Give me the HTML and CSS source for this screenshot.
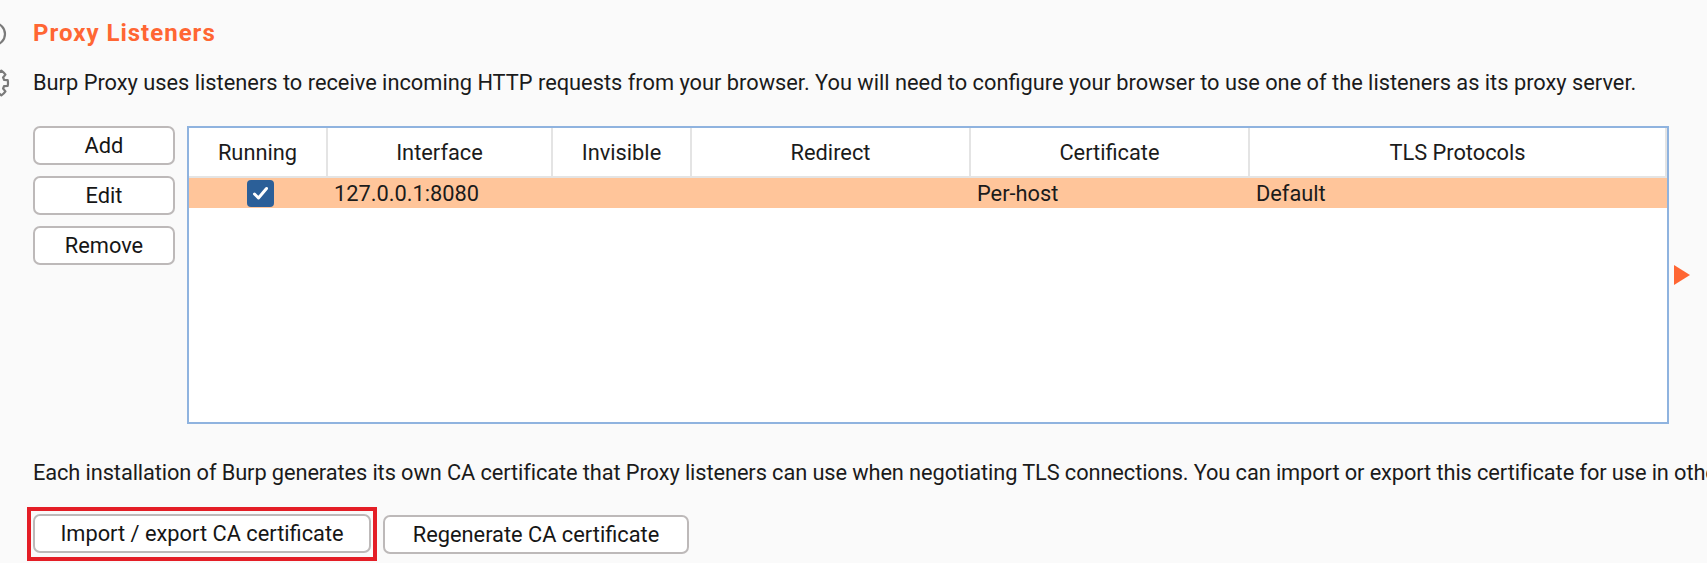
FILE: index.html
```html
<!DOCTYPE html>
<html>
<head>
<meta charset="utf-8">
<link rel="stylesheet" href="styles.css">
</head>
<body>
<div class="page">
  <div class="rail">
    <svg width="10" height="110" viewBox="0 0 10 110">
      <circle cx="-6" cy="34" r="11" fill="none" stroke="#7a7a7a" stroke-width="2.2"/>
      <path d="M -4.14 68.28 L -3.83 71.95 A 11.5 11.5 0 0 1 -1.42 72.94 L 1.39 70.56 A 15 15 0 0 1 5.44 74.61 L 3.06 77.42 A 11.5 11.5 0 0 1 4.05 79.83 L 7.72 80.14 A 15 15 0 0 1 7.72 85.86 L 4.05 86.17 A 11.5 11.5 0 0 1 3.06 88.58 L 5.44 91.39 A 15 15 0 0 1 1.39 95.44 L -1.42 93.06 A 11.5 11.5 0 0 1 -3.83 94.05 L -4.14 97.72" fill="none" stroke="#7a7a7a" stroke-width="2.2" stroke-linejoin="round"/>
    </svg>
  </div>
  <div class="main">
    <h1 class="title">Proxy Listeners</h1>
    <p class="desc">Burp Proxy uses listeners to receive incoming HTTP requests from your browser. You will need to configure your browser to use one of the listeners as its proxy server.</p>
    <div class="listeners">
      <div class="actions">
        <button class="btn">Add</button>
        <button class="btn">Edit</button>
        <button class="btn">Remove</button>
      </div>
      <div class="table">
        <div class="thead">
          <div class="th">Running</div>
          <div class="th">Interface</div>
          <div class="th">Invisible</div>
          <div class="th">Redirect</div>
          <div class="th">Certificate</div>
          <div class="th">TLS Protocols</div>
        </div>
        <div class="tr selected">
          <div class="td center"><span class="check"><svg width="17" height="15" viewBox="0 0 17 15"><path d="M2.5 8 L6.5 12 L14.5 2.5" fill="none" stroke="#fff" stroke-width="3" stroke-linecap="round" stroke-linejoin="round"/></svg></span></div>
          <div class="td">127.0.0.1:8080</div>
          <div class="td"></div>
          <div class="td"></div>
          <div class="td">Per-host</div>
          <div class="td">Default</div>
        </div>
      </div>
      <span class="expander"></span>
    </div>
    <p class="desc desc2">Each installation of Burp generates its own CA certificate that Proxy listeners can use when negotiating TLS connections. You can import or export this certificate for use in other tools or another installation of Burp.</p>
    <div class="ca-actions">
      <div class="highlight"><button class="btn btn-wide">Import / export CA certificate</button></div>
      <button class="btn btn-regen">Regenerate CA certificate</button>
    </div>
  </div>
</div>
</body>
</html>
```
FILE: styles.css
```css
html, body {
  margin: 0;
  padding: 0;
  background: #fafafa;
  overflow: hidden;
}
body {
  width: 1707px;
  height: 563px;
  font-family: Roboto, "Noto Sans", sans-serif;
  color: #1b1b1b;
}
.page {
  display: flex;
  height: 563px;
}
.rail {
  width: 10px;
  flex: none;
  overflow: hidden;
}
.rail svg {
  display: block;
}
.main {
  padding-left: 23px;
  min-width: 0;
  flex: 1;
  overflow: hidden;
}
.title {
  margin: 20px 0 0;
  font-size: 24px;
  line-height: 26px;
  font-weight: 700;
  letter-spacing: 1px;
  color: #ff6633;
}
.desc {
  margin: 25px 0 0;
  font-size: 21.8px;
  line-height: 24px;
  white-space: nowrap;
}
.listeners {
  margin-top: 31px;
  display: flex;
  align-items: flex-start;
}
.actions {
  width: 142px;
  display: flex;
  flex-direction: column;
  gap: 11px;
  flex: none;
}
.btn {
  box-sizing: border-box;
  height: 39px;
  border: 2px solid #bdb9b9;
  border-radius: 7px;
  background: #fff;
  font-family: Roboto, "Noto Sans", sans-serif;
  font-size: 21.8px;
  color: #161616;
  padding: 0;
}
.table {
  margin-left: 12px;
  box-sizing: border-box;
  width: 1482px;
  height: 298px;
  border: 2px solid #8fb3df;
  background: #fff;
  flex: none;
}
.thead, .tr {
  display: grid;
  grid-template-columns: 139px 225px 139px 279px 279px 417px;
}
.thead {
  height: 50px;
}
.th {
  box-sizing: border-box;
  border-right: 2px solid #e4e4e4;
  border-bottom: 2px solid #e4e4e4;
  display: flex;
  align-items: center;
  justify-content: center;
  font-size: 21.8px;
  color: #1b1b1b;
}
.tr {
  height: 30px;
}
.tr.selected {
  background: #ffc59a;
}
.td {
  display: flex;
  align-items: center;
  padding-left: 6px;
  font-size: 21.8px;
  white-space: nowrap;
}
.td.center {
  justify-content: center;
  padding-left: 4px;
}
.check {
  width: 27px;
  height: 27px;
  border-radius: 4px;
  background: #2b5f98;
  display: flex;
  align-items: center;
  justify-content: center;
}
.expander {
  align-self: center;
  margin-left: 5px;
  width: 0;
  height: 0;
  border-left: 16px solid #ff6633;
  border-top: 10px solid transparent;
  border-bottom: 10px solid transparent;
}
.desc2 {
  margin-top: 37px;
  letter-spacing: -0.1px;
}
.ca-actions {
  margin-top: 22px;
  margin-left: -6px;
  display: flex;
  align-items: center;
  gap: 6px;
}
.highlight {
  box-sizing: border-box;
  width: 350px;
  height: 54px;
  border: 4px solid #e41e26;
  padding: 3px 2px 0;
}
.btn-wide {
  width: 338px;
}
.btn-regen {
  width: 306px;
}
```
